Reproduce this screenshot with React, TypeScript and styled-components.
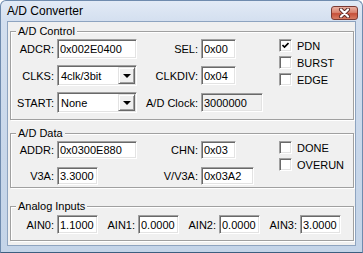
import styled, { createGlobalStyle } from "styled-components";

const GlobalStyle = createGlobalStyle`
  html, body {
    margin: 0;
    padding: 0;
    background: #ffffff;
  }
  body {
    font-family: "Liberation Sans", Arial, sans-serif;
    font-size: 11px;
    color: #000;
  }
`;

const Window = styled.div`
  width: 363px;
  height: 253px;
  box-sizing: border-box;
  border: 1px solid #6f8bae;
  border-bottom-color: #3d5f80;
  border-radius: 6px 6px 0 0;
  background: linear-gradient(#e2eaf6, #d3dfef 21px, #c8d7ea 60%, #c4d4e8);
  display: flex;
  flex-direction: column;
`;

const TitleBar = styled.div`
  height: 20px;
  display: flex;
  align-items: center;
  justify-content: space-between;
  padding: 0 4px 0 6px;
`;

const Title = styled.span`
  font-size: 12px;
  color: #000;
`;

const CloseButton = styled.div`
  width: 27px;
  height: 14px;
  box-sizing: border-box;
  margin-top: 4px;
  border: 1px solid #7b3a33;
  border-radius: 3px;
  background: linear-gradient(#eab0a2, #da8571 45%, #c6503a 55%, #d77c63);
  display: flex;
  align-items: center;
  justify-content: center;
`;

const Client = styled.div`
  flex: 1;
  margin: 0 6px 6px;
  border: 1px solid #8ea4c0;
  background: #f0f0f0;
  padding: 0 1px 0 2px;
  display: flex;
  flex-direction: column;
`;

const Group = styled.fieldset<{ $top: number; $pt: number; $pb: number }>`
  margin: ${p => p.$top}px 0 0 0;
  padding: ${p => p.$pt}px 0 ${p => p.$pb}px 0;
  min-inline-size: 0;
  border: 1px solid #a0a0a0;
  box-shadow: inset 1px 1px 0 #ffffff, 1px 1px 0 #ffffff;
`;

const Caption = styled.legend`
  margin-left: 5px;
  padding: 0 2px;
  line-height: 13px;
  background: #f0f0f0;
`;

const FormGrid = styled.div<{ $rows: string; $gap: number }>`
  display: grid;
  grid-template-columns: 46px 80px 64px 78px 1fr;
  grid-template-rows: ${p => p.$rows};
  row-gap: ${p => p.$gap}px;
  align-items: center;
`;

const Label = styled.span`
  text-align: right;
  padding-right: 3px;
  white-space: nowrap;
`;

const Edit = styled.input<{ $w: number; $h: number; $gray?: boolean }>`
  box-sizing: border-box;
  width: ${p => p.$w}px;
  height: ${p => p.$h}px;
  margin: 0;
  padding: 0 0 0 2px;
  font-family: "Liberation Sans", Arial, sans-serif;
  font-size: 11px;
  color: #000;
  border: 1px solid;
  border-color: #a0a0a0 #ffffff #ffffff #a0a0a0;
  box-shadow: inset 1px 1px 0 #696969, inset -1px -1px 0 #e3e3e3;
  background: ${p => (p.$gray ? "#f0f0f0" : "#ffffff")};
  outline: none;
`;

const Combo = styled.div`
  box-sizing: border-box;
  width: 80px;
  height: 21px;
  border: 1px solid;
  border-color: #a0a0a0 #ffffff #ffffff #a0a0a0;
  box-shadow: inset 1px 1px 0 #696969, inset -1px -1px 0 #e3e3e3;
  background: #ffffff;
  padding: 1px;
  display: flex;
  align-items: center;
`;

const ComboText = styled.span`
  flex: 1;
  padding-left: 2px;
`;

const DropButton = styled.div`
  box-sizing: border-box;
  width: 17px;
  height: 17px;
  background: #f0f0f0;
  border: 1px solid;
  border-color: #e3e3e3 #696969 #696969 #e3e3e3;
  box-shadow: inset 1px 1px 0 #ffffff, inset -1px -1px 0 #a0a0a0;
  display: flex;
  align-items: center;
  justify-content: center;
`;

const Arrow = styled.span`
  width: 0;
  height: 0;
  border-left: 4px solid transparent;
  border-right: 4px solid transparent;
  border-top: 4px solid #000;
`;

const CheckColumn = styled.div<{ $span: number; $pt: number }>`
  grid-column: 5;
  grid-row: 1 / span ${p => p.$span};
  align-self: start;
  padding-top: ${p => p.$pt}px;
  display: flex;
  flex-direction: column;
  gap: 4px;
`;

const CheckRow = styled.div`
  display: flex;
  align-items: center;
  gap: 5px;
  height: 13px;
`;

const Box = styled.span`
  box-sizing: border-box;
  width: 13px;
  height: 13px;
  border: 1px solid;
  border-color: #a0a0a0 #ffffff #ffffff #a0a0a0;
  box-shadow: inset 1px 1px 0 #696969, inset -1px -1px 0 #e3e3e3;
  background: #ffffff;
  display: flex;
  align-items: center;
  justify-content: center;
`;

const InputsRow = styled.div`
  display: grid;
  grid-template-columns: 46px 41px 40px 41px 40px 41px 40px 41px;
  align-items: center;
`;

function Check({ label, checked }: { label: string; checked?: boolean }) {
  return (
    <CheckRow>
      <Box>
        {checked && (
          <svg width="7" height="7" viewBox="0 0 7 7">
            <path d="M0.5 3 L2.5 5 L6.5 1" stroke="#000" strokeWidth="1.6" fill="none" />
          </svg>
        )}
      </Box>
      <span>{label}</span>
    </CheckRow>
  );
}

function Select({ value }: { value: string }) {
  return (
    <Combo>
      <ComboText>{value}</ComboText>
      <DropButton>
        <Arrow />
      </DropButton>
    </Combo>
  );
}

export default function App() {
  return (
    <>
      <GlobalStyle />
      <Window>
        <TitleBar>
          <Title>A/D Converter</Title>
          <CloseButton>
            <svg width="13" height="10" viewBox="0 0 13 10">
              <path d="M3 1.5 L10 8.5 M10 1.5 L3 8.5" stroke="#5a2a26" strokeWidth="4" strokeLinecap="round" />
              <path d="M3 1.5 L10 8.5 M10 1.5 L3 8.5" stroke="#ffffff" strokeWidth="2.2" strokeLinecap="round" />
            </svg>
          </CloseButton>
        </TitleBar>
        <Client>
          <Group $top={3} $pt={0} $pb={6}>
            <Caption>A/D Control</Caption>
            <FormGrid $rows="21px 21px 21px" $gap={6}>
              <Label>ADCR:</Label>
              <Edit $w={80} $h={20} readOnly value="0x002E0400" />
              <Label>SEL:</Label>
              <Edit $w={35} $h={20} readOnly value="0x00" />
              <CheckColumn $span={3} $pt={1}>
                <Check label="PDN" checked />
                <Check label="BURST" />
                <Check label="EDGE" />
              </CheckColumn>
              <Label>CLKS:</Label>
              <Select value="4clk/3bit" />
              <Label>CLKDIV:</Label>
              <Edit $w={35} $h={19} readOnly value="0x04" />
              <Label>START:</Label>
              <Select value="None" />
              <Label>A/D Clock:</Label>
              <Edit $w={62} $h={19} $gray readOnly value="3000000" />
            </FormGrid>
          </Group>
          <Group $top={7} $pt={1} $pb={2}>
            <Caption>A/D Data</Caption>
            <FormGrid $rows="18px 18px" $gap={8}>
              <Label>ADDR:</Label>
              <Edit $w={80} $h={18} readOnly value="0x0300E880" />
              <Label>CHN:</Label>
              <Edit $w={35} $h={18} readOnly value="0x03" />
              <CheckColumn $span={2} $pt={0}>
                <Check label="DONE" />
                <Check label="OVERUN" />
              </CheckColumn>
              <Label>V3A:</Label>
              <Edit $w={41} $h={18} readOnly value="3.3000" />
              <Label>V/V3A:</Label>
              <Edit $w={53} $h={18} readOnly value="0x03A2" />
            </FormGrid>
          </Group>
          <Group $top={12} $pt={2} $pb={6}>
            <Caption>Analog Inputs</Caption>
            <InputsRow>
              <Label>AIN0:</Label>
              <Edit $w={41} $h={19} readOnly value="1.1000" />
              <Label>AIN1:</Label>
              <Edit $w={41} $h={19} readOnly value="0.0000" />
              <Label>AIN2:</Label>
              <Edit $w={41} $h={19} readOnly value="0.0000" />
              <Label>AIN3:</Label>
              <Edit $w={41} $h={19} readOnly value="3.0000" />
            </InputsRow>
          </Group>
        </Client>
      </Window>
    </>
  );
}
